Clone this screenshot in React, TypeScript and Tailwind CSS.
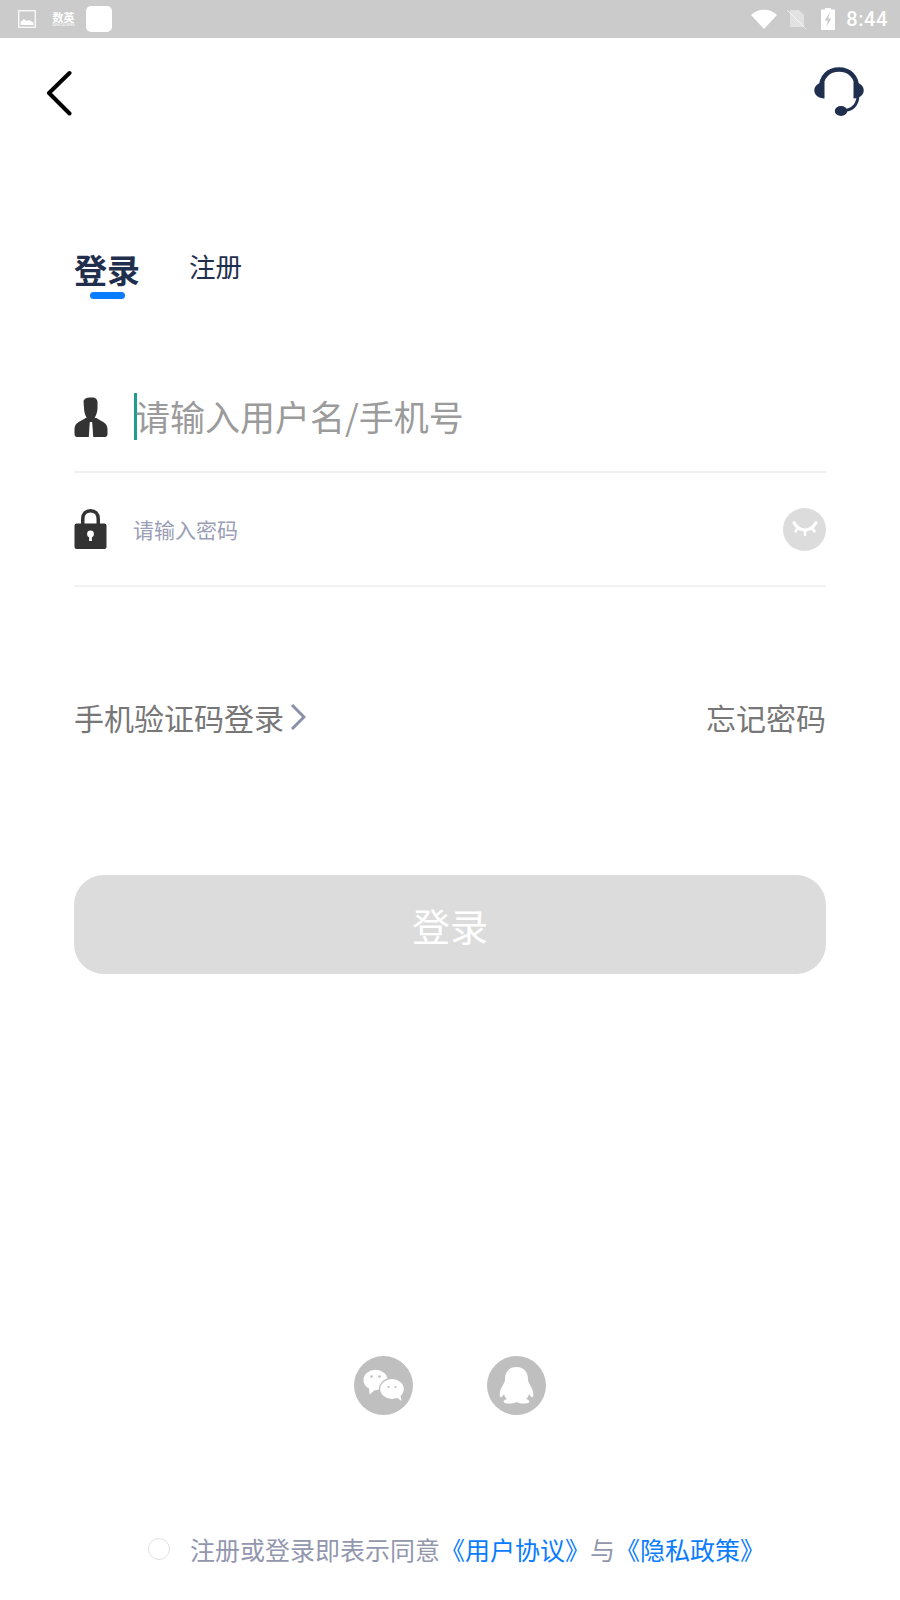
const BackIcon = () => (
  <svg width="28" height="46" viewBox="0 0 28 46" fill="none">
    <path d="M24.5 3 L4 23 L24.5 43.5" stroke="#000" strokeWidth="4" strokeLinecap="round" strokeLinejoin="round" />
  </svg>
);

const HeadsetIcon = () => (
  <svg width="50" height="50" viewBox="0 0 50 50" fill="none">
    <path d="M7 22 C7 9 15 2.5 25 2.5 C35 2.5 43 9 43 22" stroke="#1f2f4d" strokeWidth="4.6" />
    <path d="M10.5 15 L10.5 31.5 C4 31.5 0.3 27.5 0.3 23.5 C0.3 19 4 15.5 10.5 15 Z" fill="#1f2f4d" />
    <path d="M39.5 15 L39.5 31.5 C46 31.5 49.7 27.5 49.7 23.5 C49.7 19 46 15.5 39.5 15 Z" fill="#1f2f4d" />
    <path d="M44 30 C43 38 38 43 30 43.5" stroke="#1f2f4d" strokeWidth="2.8" />
    <ellipse cx="27" cy="44" rx="6.2" ry="5" fill="#1f2f4d" />
  </svg>
);

const PersonIcon = () => (
  <svg width="34" height="40" viewBox="0 0 34 40">
    <path d="M9.5 4 C10 2 13 0 17 0.5 C21 0 23.5 2 23.5 5 L23.5 11 C23.5 16 21 20 20 22 L13.5 22 C12 20 10 16 10 11 Z" fill="#333" />
    <path d="M11.5 21 C8 24 0.5 25 0.5 32 L0.5 37 C0.5 39 1.5 40 3 40 L31 40 C32.5 40 33.5 39 33.5 37 L33.5 32 C33.5 25 26 24 22.5 21 Z" fill="#333" />
    <path d="M15.8 25 L18.2 25 L19.2 40 L14.8 40 Z" fill="#fff" />
  </svg>
);

const LockIcon = () => (
  <svg width="33" height="40" viewBox="0 0 33 40">
    <path d="M8.75 16 L8.75 10 C8.75 4.5 12 1.8 16.5 1.8 C21 1.8 24.25 4.5 24.25 10 L24.25 16" fill="none" stroke="#333" strokeWidth="3.5" />
    <rect x="0.5" y="14.5" width="32" height="25.5" rx="2" fill="#333" />
    <circle cx="16.5" cy="25" r="3.4" fill="#fff" />
    <path d="M15.3 26 L17.7 26 L18 32 L15 32 Z" fill="#fff" />
  </svg>
);

const EyeClosedIcon = () => (
  <svg width="26" height="16" viewBox="0 0 26 16" fill="none" stroke="#fff" strokeLinecap="round">
    <path d="M2 1.8 C5 7 9 9 13 9 C17 9 21 7 24 1.8" strokeWidth="3.2" />
    <path d="M13 9.5 L13 14 M5.5 7.5 L3.5 10.5 M20.5 7.5 L22.5 10.5" strokeWidth="2.6" />
  </svg>
);

const WechatIcon = () => (
  <svg width="59" height="59" viewBox="0 0 59 59">
    <circle cx="29.5" cy="29.5" r="29.5" fill="#bfbfbf" />
    <ellipse cx="21.5" cy="24" rx="12" ry="10.2" fill="#fff" />
    <path d="M15 32 L15.5 38.5 L22 33 Z" fill="#fff" />
    <ellipse cx="38" cy="33" rx="13" ry="11.2" fill="#bfbfbf" />
    <ellipse cx="38" cy="33" rx="11.8" ry="10" fill="#fff" />
    <path d="M42 41 L47.5 45 L46 37 Z" fill="#fff" />
    <circle cx="17.5" cy="20.5" r="1.3" fill="#bfbfbf" />
    <circle cx="25.5" cy="20.5" r="1.3" fill="#bfbfbf" />
    <circle cx="34.5" cy="31" r="1.1" fill="#bfbfbf" />
    <circle cx="41.5" cy="31" r="1.1" fill="#bfbfbf" />
  </svg>
);

const QqIcon = () => (
  <svg width="59" height="59" viewBox="0 0 59 59">
    <circle cx="29.5" cy="29.5" r="29.5" fill="#bfbfbf" />
    <path
      d="M29.5 11 C22 11 18 16 18 23 C18 25 17.5 26.5 16 29 C13.5 33 12 37 13 41 C14 42 16 40 17 38 C17.5 40 18.5 42 20 43 C17 44 16 45 17 46.5 C19 48 26 48 29.5 46 C33 48 40 48 42 46.5 C43 45 42 44 39 43 C40.5 42 41.5 40 42 38 C43 40 45 42 46 41 C47 37 45.5 33 43 29 C41.5 26.5 41 25 41 23 C41 16 37 11 29.5 11 Z"
      fill="#fff"
    />
  </svg>
);

const StatusLeft = () => (
  <div className="flex items-center">
    <svg width="18" height="18" viewBox="0 0 18 18" className="ml-[18px]">
      <rect x="0.75" y="0.75" width="16.5" height="16.5" fill="none" stroke="#fff" strokeWidth="1.2" />
      <path d="M2.5 15 L2.5 12 L6 9 L8.5 11 L11 10 L15.5 12.5 L15.5 15 Z" fill="#fff" />
    </svg>
    <div className="ml-[16px] flex w-[23px] flex-col items-center text-white">
      <span className="text-[11px] font-bold leading-[11px]">数英</span>
      <span className="font-['Roboto',sans-serif] text-[4px] leading-[4px]">DIGITALENG</span>
    </div>
    <div className="ml-[11px] h-[26px] w-[26px] rounded-[5px] bg-white" />
  </div>
);

const StatusRight = () => (
  <div className="flex items-center">
    <svg width="26" height="20" viewBox="0 0 26 20">
      <path d="M0 6 C7 -1 19 -1 26 6 L13 20 Z" fill="#fff" />
    </svg>
    <svg width="20" height="20" viewBox="0 0 20 20" className="ml-[10px]">
      <path d="M3 1 L12 1 L17 6 L17 18 L3 18 Z" fill="#fff" opacity="0.45" />
      <path d="M0 1 L19 20" stroke="#fff" strokeWidth="1" opacity="0.6" />
    </svg>
    <svg width="14" height="22" viewBox="0 0 14 22" className="ml-[14px]">
      <path d="M4 0 L10 0 L10 1.5 L14 1.5 L14 22 L0 22 L0 1.5 L4 1.5 Z" fill="#fff" />
      <path d="M8.8 4 L3.8 12.5 L6.8 12.5 L5.3 19 L10.2 10.5 L7.2 10.5 Z" fill="#cbcbcb" />
    </svg>
    <span className="ml-[11px] mr-[12px] font-['Roboto',sans-serif] text-[20px] font-medium leading-none tracking-[0.6px] text-white">8:44</span>
  </div>
);

export default function App() {
  return (
    <div className="flex h-[1600px] w-[900px] flex-col bg-white font-['Noto_Sans_CJK_SC',sans-serif]">
      <div className="flex h-[38px] items-center justify-between bg-[#cbcbcb]">
        <StatusLeft />
        <StatusRight />
      </div>

      <div className="mt-[32px] flex items-start justify-between pl-[45px] pr-[36px]">
        <BackIcon />
        <div className="-mt-[3px]"><HeadsetIcon /></div>
      </div>

      <div className="mt-[129px] flex items-start pl-[74px] text-[#1f2f4d]">
        <div className="flex w-[66px] flex-col items-center">
          <span className="text-[33px] font-bold leading-[46px]">登录</span>
          <div className="h-[7px] w-[35px] rounded-full bg-[#0a7cff]" />
        </div>
        <span className="ml-[49px] mt-[-3px] text-[26.5px] leading-[46px]">注册</span>
      </div>

      <div className="mx-[74px] mt-[94px] flex h-[80px] items-start border-b-2 border-[#f1f1f1]">
        <div className="mt-[4px]"><PersonIcon /></div>
        <div className="ml-[26px] h-[47px] w-[3px] bg-[#1f9e8e]" />
        <span className="-ml-[2px] -mt-[1px] text-[35px] leading-[47px] text-[#9b9b9b]">请输入用户名/手机号</span>
      </div>

      <div className="mx-[74px] flex h-[114px] items-center border-b-2 border-[#f1f1f1]">
        <LockIcon />
        <span className="ml-[26px] mt-[2px] text-[21px] text-[#9a9eb6]">请输入密码</span>
        <div className="ml-auto flex h-[43px] w-[43px] items-center justify-center rounded-full bg-[#dcdcdc]">
          <EyeClosedIcon />
        </div>
      </div>

      <div className="mx-[74px] mt-[110px] flex items-center justify-between text-[30px] leading-[40px] text-[#777]">
        <div className="flex items-center">
          <span>手机验证码登录</span>
          <svg width="16" height="28" viewBox="0 0 16 28" fill="none" className="ml-[6px]">
            <path d="M2 2 L14 14 L2 26" stroke="#8a90ab" strokeWidth="3" />
          </svg>
        </div>
        <span>忘记密码</span>
      </div>

      <button className="mx-[74px] mt-[138px] flex h-[99px] items-center justify-center rounded-[30px] bg-[#dcdcdc] text-[38px] text-white">
        登录
      </button>

      <div className="mt-[382px] flex justify-center gap-[74px]">
        <WechatIcon />
        <QqIcon />
      </div>

      <div className="mt-[116px] flex items-center pl-[148px] text-[25px] leading-[36px] text-[#9397ae]">
        <div className="h-[22px] w-[22px] rounded-full border border-[#e2e2e2]" />
        <p className="ml-[20px] [text-spacing-trim:space-all]">
          注册或登录即表示同意
          <span className="text-[#0a7cff]">《用户协议》</span>
          与
          <span className="text-[#0a7cff]">《隐私政策》</span>
        </p>
      </div>
    </div>
  );
}
